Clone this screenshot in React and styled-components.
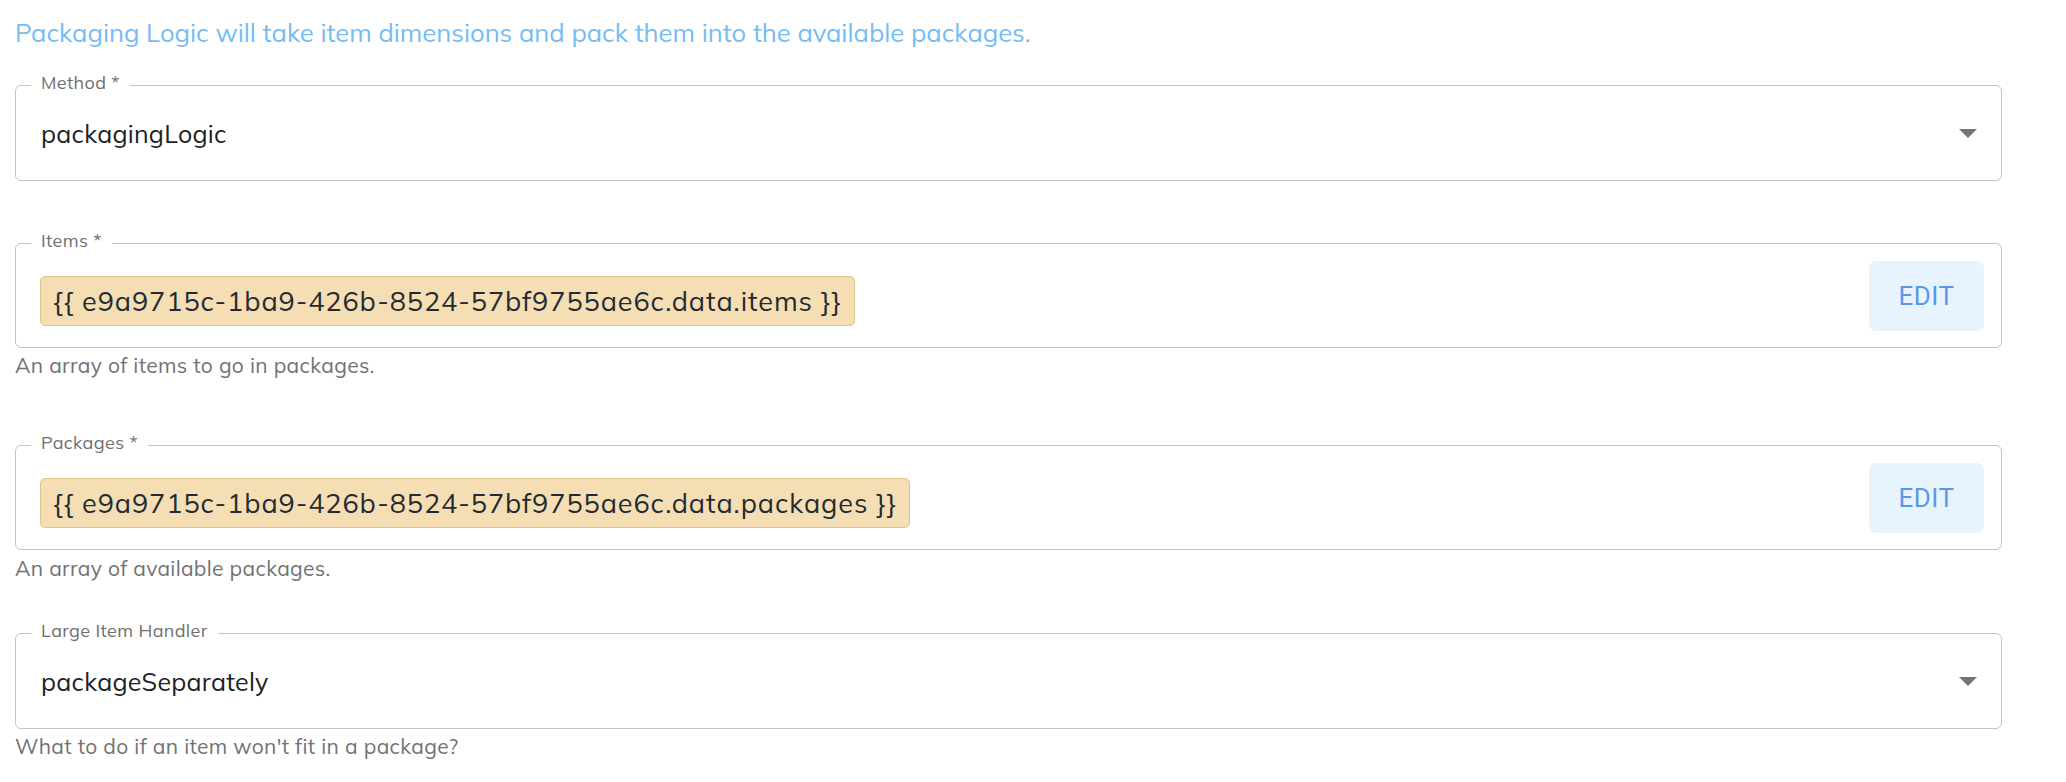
import React from 'react'
import styled, { createGlobalStyle } from 'styled-components'

const GlobalStyle = createGlobalStyle`
  body {
    margin: 0;
    background: #ffffff;
    font-family: "Mulish", "Muli", Lato, "Open Sans", sans-serif;
  }
`

const Page = styled.div`
  padding: 16px 64px 40px 15px;
`

const Intro = styled.p`
  margin: 0;
  font-size: 25.6px;
  line-height: 32px;
  color: #74bcf4;
`

const Field = styled.div`
  margin-top: ${(p) => p.$top}px;
`

const Box = styled.fieldset`
  margin: 0;
  padding: 0;
  min-width: 0;
  border: 1px solid #c4c4c4;
  border-radius: 6px;
`

const Legend = styled.legend`
  margin-left: 15px;
  padding: 0 10px 4px;
  font-size: 18px;
  line-height: 20px;
  color: #6f6f6f;
  letter-spacing: 0.02em;
`

const Row = styled.div`
  display: flex;
  align-items: center;
  box-sizing: border-box;
  height: ${(p) => p.$h}px;
  padding: 0 17px ${(p) => p.$pb || 0}px 24px;
`

const Value = styled.span`
  flex: 1;
  padding-left: 1px;
  font-size: 25px;
  color: #212121;
  letter-spacing: 0.01em;
`

const Arrow = styled.svg`
  margin-right: 7px;
  fill: #757575;
`

const Chip = styled.span`
  display: inline-flex;
  align-items: center;
  box-sizing: border-box;
  height: 50px;
  padding: 0 12px;
  background: #f5deb3;
  border: 1px solid #dfc38e;
  border-radius: 5px;
  font-size: 27px;
  color: #222b33;
  letter-spacing: 0.035em;
  white-space: nowrap;
`

const Spacer = styled.div`
  flex: 1;
`

const EditButton = styled.button`
  width: 115px;
  height: 70px;
  margin-bottom: 11px;
  padding: 0;
  border: 0;
  border-radius: 7px;
  background: #e7f4fd;
  color: #5c96e9;
  font-family: Roboto, "Liberation Sans", sans-serif;
  font-size: 26px;
  letter-spacing: 0.5px;
  cursor: pointer;
`

const Helper = styled.div`
  margin-top: ${(p) => p.$top || 5}px;
  font-size: 21px;
  line-height: 24px;
  color: #727272;
  letter-spacing: 0.015em;
`

function DropArrow() {
  return (
    <Arrow width="18" height="9" viewBox="0 0 18 9">
      <polygon points="0,0 18,0 9,9" />
    </Arrow>
  )
}

function SelectField({ label, value, top, helper }) {
  return (
    <Field $top={top}>
      <Box>
        <Legend>{label}</Legend>
        <Row $h={83} $pb={10}>
          <Value>{value}</Value>
          <DropArrow />
        </Row>
      </Box>
      {helper && <Helper>{helper}</Helper>}
    </Field>
  )
}

function ExpressionField({ label, expr, top, helper, helperTop }) {
  return (
    <Field $top={top}>
      <Box>
        <Legend>{label}</Legend>
        <Row $h={92}>
          <Chip>{`{{ ${expr} }}`}</Chip>
          <Spacer />
          <EditButton>EDIT</EditButton>
        </Row>
      </Box>
      <Helper $top={helperTop}>{helper}</Helper>
    </Field>
  )
}

export default function App() {
  const id = 'e9a9715c-1ba9-426b-8524-57bf9755ae6c'
  return (
    <>
      <GlobalStyle />
      <Page>
        <Intro>Packaging Logic will take item dimensions and pack them into the available packages.</Intro>
        <SelectField label="Method *" value="packagingLogic" top={25} />
        <ExpressionField
          label="Items *"
          expr={`${id}.data.items`}
          top={50}
          helper="An array of items to go in packages."
        />
        <ExpressionField
          label="Packages *"
          expr={`${id}.data.packages`}
          top={56}
          helper="An array of available packages."
          helperTop={6}
        />
        <SelectField
          label="Large Item Handler"
          value="packageSeparately"
          top={41}
          helper="What to do if an item won't fit in a package?"
        />
      </Page>
    </>
  )
}
